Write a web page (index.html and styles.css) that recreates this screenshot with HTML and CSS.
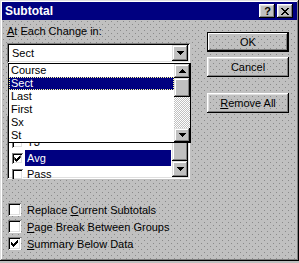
FILE: index.html
```html
<!DOCTYPE html>
<html>
<head>
<meta charset="utf-8">
<title>Subtotal</title>
<link rel="stylesheet" href="styles.css">
</head>
<body>
<div class="dialog">
  <div class="titlebar">
    <span class="title">Subtotal</span>
    <div class="tbtns">
      <span class="tbtn help">?</span>
      <span class="tbtn close">
        <svg width="8" height="7" viewBox="0 0 8 7" shape-rendering="crispEdges"><path d="M0 0h2v1h-2zM6 0h2v1h-2zM1 1h2v1h-2zM5 1h2v1h-2zM2 2h4v1h-4zM3 3h2v1h-2zM2 4h4v1h-4zM1 5h2v1h-2zM5 5h2v1h-2zM0 6h2v1h-2zM6 6h2v1h-2z"/></svg>
      </span>
    </div>
  </div>
  <div class="content">
    <div class="left">
      <div class="label"><u>A</u>t Each Change in:</div>
      <div class="combo">
        <span class="combo-text">Sect</span>
        <span class="sbtn"><svg width="7" height="4" viewBox="0 0 7 4" shape-rendering="crispEdges"><path d="M0 0h7v1h-7zM1 1h5v1h-5zM2 2h3v1h-3zM3 3h1v1h-1z"/></svg></span>
      </div>
      <div class="listbox">
        <div class="rows">
          <div class="row"><span class="cb small"></span><span class="rtext">T2</span></div>
          <div class="row"><span class="cb small"></span><span class="rtext">T3</span></div>
          <div class="row"><span class="cb small"><svg width="7" height="7" viewBox="0 0 7 7" shape-rendering="crispEdges"><path d="M6 0h1v3h-1zM5 1h1v3h-1zM4 2h1v3h-1zM0 2h1v3h-1zM1 3h1v3h-1zM3 3h1v3h-1zM2 4h1v3h-1z"/></svg></span><span class="rtext sel">Avg</span></div>
          <div class="row"><span class="cb small"></span><span class="rtext">Pass</span></div>
        </div>
        <div class="vscroll">
          <span class="track"></span>
          <span class="thumb"></span>
          <span class="sbtn"><svg width="7" height="4" viewBox="0 0 7 4" shape-rendering="crispEdges"><path d="M0 0h7v1h-7zM1 1h5v1h-5zM2 2h3v1h-3zM3 3h1v1h-1z"/></svg></span>
        </div>
      </div>
      <div class="checks">
        <div class="check"><span class="cb"></span><span><span>Replace </span><u>C</u>urrent Subtotals</span></div>
        <div class="check"><span class="cb"></span><span><u>P</u>age Break Between Groups</span></div>
        <div class="check"><span class="cb"><svg width="7" height="7" viewBox="0 0 7 7" shape-rendering="crispEdges"><path d="M6 0h1v3h-1zM5 1h1v3h-1zM4 2h1v3h-1zM0 2h1v3h-1zM1 3h1v3h-1zM3 3h1v3h-1zM2 4h1v3h-1z"/></svg></span><span><u>S</u>ummary Below Data</span></div>
      </div>
    </div>
    <div class="right">
      <div class="btn default"><span class="btn-in">OK</span></div>
      <div class="btn">Cancel</div>
      <div class="btn spaced"><span><u>R</u>emove All</span></div>
    </div>
  </div>
  <div class="dropdown">
    <div class="ditems">
      <div class="ditem">Course</div>
      <div class="ditem dsel">Sect</div>
      <div class="ditem">Last</div>
      <div class="ditem">First</div>
      <div class="ditem">Sx</div>
      <div class="ditem">St</div>
    </div>
    <div class="dscroll">
      <span class="sbtn"><svg width="7" height="4" viewBox="0 0 7 4" shape-rendering="crispEdges"><path d="M3 0h1v1h-1zM2 1h3v1h-3zM1 2h5v1h-5zM0 3h7v1h-7z"/></svg></span>
      <span class="thumb"></span>
      <span class="track"></span>
      <span class="sbtn"><svg width="7" height="4" viewBox="0 0 7 4" shape-rendering="crispEdges"><path d="M0 0h7v1h-7zM1 1h5v1h-5zM2 2h3v1h-3zM3 3h1v1h-1z"/></svg></span>
    </div>
  </div>
</div>
</body>
</html>
```
FILE: styles.css
```css
html, body {
  margin: 0;
  padding: 0;
  background: #c0c0c0;
}
body {
  font-family: "Liberation Sans", Arial, sans-serif;
  font-size: 11px;
  color: #000;
}
.dialog {
  position: relative;
  width: 299px;
  height: 261px;
  box-sizing: border-box;
  padding: 2px;
  background-color: #c0c0c0;
  background-image:
    conic-gradient(at 1px 1px, transparent 270deg, #8a8a8a 0),
    conic-gradient(at 1px 1px, transparent 270deg, #8a8a8a 0);
  background-size: 6px 6px;
  background-position: 0 0, 3px 3px;
  box-shadow: inset -1px -1px #000, inset 1px 1px #dfdfdf, inset -2px -2px #808080, inset 2px 2px #fff;
  overflow: hidden;
}
.titlebar {
  height: 18px;
  background: #000080;
  display: flex;
  align-items: center;
  justify-content: space-between;
  padding: 0 4px 0 3px;
}
.title {
  color: #fff;
  font-weight: bold;
  font-size: 12px;
  line-height: 14px;
}
.tbtns {
  display: flex;
  gap: 2px;
}
.tbtn {
  width: 16px;
  height: 14px;
  box-sizing: border-box;
  background: #c0c0c0;
  box-shadow: inset -1px -1px #000, inset 1px 1px #fff, inset -2px -2px #808080, inset 2px 2px #dfdfdf;
  display: flex;
  align-items: center;
  justify-content: center;
}
.help {
  font-weight: bold;
  font-size: 11px;
  line-height: 12px;
  padding-left: 1px;
}
.close svg {
  margin-top: 0;
}
.content {
  display: flex;
  padding-left: 5px;
  gap: 17px;
}
.left {
  width: 183px;
  display: flex;
  flex-direction: column;
}
.label {
  margin-top: 5px;
  line-height: 13px;
}
u {
  text-decoration: underline;
  text-underline-offset: 1px;
}
.combo {
  margin-top: 5px;
  height: 20px;
  box-sizing: border-box;
  background: #fff;
  box-shadow: inset 1px 1px #808080, inset -1px -1px #fff, inset 2px 2px #000, inset -2px -2px #dfdfdf;
  display: flex;
  align-items: center;
  justify-content: space-between;
  padding: 2px;
}
.combo-text {
  padding-left: 3px;
  line-height: 13px;
}
.sbtn {
  width: 16px;
  height: 16px;
  flex: none;
  box-sizing: border-box;
  background: #c0c0c0;
  box-shadow: inset -1px -1px #000, inset 1px 1px #dfdfdf, inset -2px -2px #808080, inset 2px 2px #fff;
  display: flex;
  align-items: center;
  justify-content: center;
}
.listbox {
  margin-top: 53px;
  height: 63px;
  box-sizing: border-box;
  background: #fff;
  box-shadow: inset 1px 1px #808080, inset -1px -1px #fff, inset 2px 2px #000, inset -2px -2px #dfdfdf;
  padding: 2px;
  display: flex;
  overflow: hidden;
}
.rows {
  flex: 1;
  display: flex;
  flex-direction: column;
  padding-left: 3px;
  padding-right: 1px;
}
.row {
  height: 16px;
  flex: none;
  display: flex;
  align-items: center;
}
.rtext {
  margin-left: 2px;
  padding: 0 2px;
  line-height: 15px;
  flex: 1;
  align-self: stretch;
  display: flex;
  align-items: center;
}
.rtext.sel {
  background: #000080;
  color: #fff;
}
.cb {
  width: 13px;
  height: 13px;
  flex: none;
  box-sizing: border-box;
  background: #fff;
  box-shadow: inset 1px 1px #808080, inset -1px -1px #fff, inset 2px 2px #000, inset -2px -2px #dfdfdf;
  display: flex;
  align-items: center;
  justify-content: center;
}
.cb.small {
  width: 11px;
  height: 11px;
}
.cb.small svg {
  transform: scale(0.9);
}
.vscroll {
  width: 16px;
  display: flex;
  flex-direction: column;
}
.track {
  flex: 1;
  background-image: conic-gradient(#fff 25%, #c0c0c0 0 50%, #fff 0 75%, #c0c0c0 0);
  background-size: 2px 2px;
}
.thumb {
  height: 20px;
  flex: none;
  background: #c0c0c0;
  box-shadow: inset -1px -1px #000, inset 1px 1px #dfdfdf, inset -2px -2px #808080, inset 2px 2px #fff;
}
.checks {
  margin-top: 22px;
  padding-left: 1px;
  display: flex;
  flex-direction: column;
}
.check {
  height: 17px;
  display: flex;
  align-items: center;
  gap: 6px;
}
.right {
  width: 82px;
  display: flex;
  flex-direction: column;
  padding-top: 12px;
  gap: 5px;
}
.btn {
  height: 20px;
  box-sizing: border-box;
  background-color: transparent;
  box-shadow: inset -1px -1px #000, inset 1px 1px #fff, inset -2px -2px #808080, inset 2px 2px #dfdfdf;
  display: flex;
  align-items: center;
  justify-content: center;
  line-height: 13px;
}
.btn.default {
  box-shadow: inset 0 0 0 1px #000, inset -2px -2px #000, inset 2px 2px #fff, inset -3px -3px #808080;
}
.btn.spaced {
  margin-top: 11px;
}
.dropdown {
  position: absolute;
  left: 8px;
  top: 63px;
  width: 183px;
  height: 80px;
  box-sizing: border-box;
  border: 1px solid #000;
  background: #fff;
  display: flex;
}
.ditems {
  flex: 1;
  display: flex;
  flex-direction: column;
}
.ditem {
  height: 13px;
  line-height: 13px;
  padding-left: 2px;
}
.ditem.dsel {
  background: #000080;
  color: #fff;
  outline: 1px dotted #ffff99;
  outline-offset: -1px;
}
.dscroll {
  width: 16px;
  display: flex;
  flex-direction: column;
}
.dscroll .sbtn {
  height: 14px;
}
.dscroll .thumb {
  height: 19px;
}
```
